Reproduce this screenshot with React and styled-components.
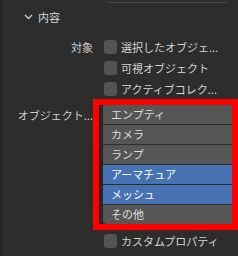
import styled, { createGlobalStyle } from 'styled-components';

const GlobalStyle = createGlobalStyle`
    html, body {
        margin: 0;
        padding: 0;
        background: #2d2d2d;
    }
`;

const Panel = styled.div`
    width: 238px;
    height: 256px;
    overflow: hidden;
    box-sizing: border-box;
    background: #2d2d2d;
    border-left: 3px solid #262626;
    font-family: 'Noto Sans CJK JP', 'Noto Sans', sans-serif;
    font-size: 11px;
    color: #d4d4d4;
`;

// bottom edge of the field above (cut off)
const PrevField = styled.div`
    margin-left: 102px;
    width: 123px;
    height: 2px;
    border-bottom: 1px solid #454545;
    border-radius: 0 0 3px 3px;
    background: #303030;
`;

const Header = styled.div`
    display: flex;
    align-items: center;
    gap: 5px;
    height: 28px;
    padding-left: 21px;
    color: #d8d8d8;
`;

const Body = styled.div`
    display: flex;
    flex-direction: column;
    padding-top: 5px;
`;

const Row = styled.div`
    display: flex;
    align-items: ${(p) => (p.$top ? 'flex-start' : 'center')};
    height: ${(p) => p.$h || 21}px;
`;

const Label = styled.div`
    width: 90px;
    flex-shrink: 0;
    text-align: right;
    color: #cfcfcf;
    line-height: 20px;
    padding-top: ${(p) => p.$pt || 0}px;
`;

const Check = styled.div`
    display: flex;
    align-items: center;
    gap: 4px;
    margin-left: ${(p) => p.$ml || 11}px;
    white-space: nowrap;
`;

const Box = styled.span`
    width: 13px;
    height: 14px;
    border-radius: 3px;
    background: #545454;
    flex-shrink: 0;
`;

const Highlight = styled.div`
    flex: 1;
    border: 6px solid #ff0000;
    padding-left: 4px;
    background: #272727;
`;

const Menu = styled.div`
    display: flex;
    flex-direction: column;
    border-radius: 0 0 0 4px;
    overflow: hidden;
`;

const Item = styled.div`
    height: 19px;
    line-height: 19px;
    padding-left: 8px;
    border-top: ${(p) => (p.$first ? 'none' : '1px solid #2e2e2e')};
    background: ${(p) => (p.$selected ? '#4772b3' : '#565656')};
    color: ${(p) => (p.$selected ? '#ffffff' : '#dedede')};
`;

const Chevron = () => (
    <svg width="9" height="6" viewBox="0 0 9 6">
        <path d="M1 1 L4.5 4.5 L8 1" fill="none" stroke="#cfcfcf" strokeWidth="1.3" />
    </svg>
);

const items = [
    { name: 'エンプティ' },
    { name: 'カメラ' },
    { name: 'ランプ' },
    { name: 'アーマチュア', selected: true },
    { name: 'メッシュ', selected: true },
    { name: 'その他' },
];

const App = () => (
    <>
        <GlobalStyle />
        <Panel>
            <PrevField />
            <Header>
                <Chevron />
                <span>内容</span>
            </Header>
            <Body>
                <Row>
                    <Label>対象</Label>
                    <Check><Box />選択したオブジェ...</Check>
                </Row>
                <Row>
                    <Label />
                    <Check><Box />可視オブジェクト</Check>
                </Row>
                <Row>
                    <Label />
                    <Check><Box />アクティブコレク...</Check>
                </Row>
                <Row $top $h={132}>
                    <Label $pt={6}>オブジェクト...</Label>
                    <Highlight>
                        <Menu>
                            {items.map((it, i) => (
                                <Item key={it.name} $first={i === 0} $selected={it.selected}>
                                    {it.name}
                                </Item>
                            ))}
                        </Menu>
                    </Highlight>
                </Row>
                <Row $h={19}>
                    <Label />
                    <Check><Box />カスタムプロパティ</Check>
                </Row>
            </Body>
        </Panel>
    </>
);

export default App;
